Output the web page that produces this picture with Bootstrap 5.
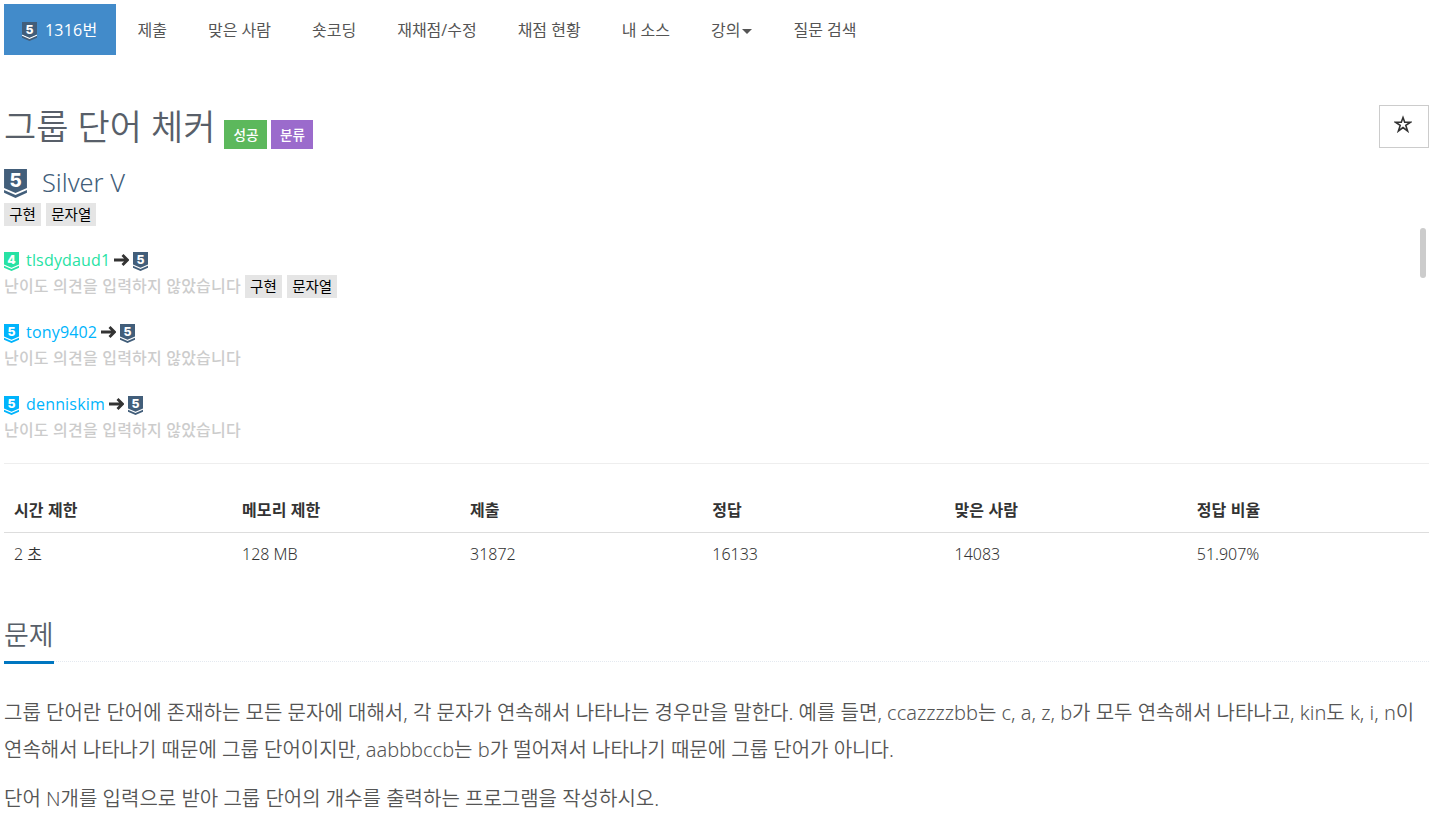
<!DOCTYPE html>
<html lang="ko">

<head>
    <meta charset="UTF-8">
    <meta name="viewport" content="width=device-width, initial-scale=1.0">
    <title>1316번: 그룹 단어 체커</title>
    <link href="https://cdn.jsdelivr.net/npm/bootstrap@5.3.0/dist/css/bootstrap.min.css" rel="stylesheet">
    <style>
        body {
            font-family: "Open Sans", "Noto Sans CJK KR", sans-serif;
            font-size: 16px;
            color: #333;
            padding: 4px 5px 0 4px;
            height: 813px;
            overflow: hidden;
        }

        .problem-menu {
            gap: 2px;
            height: 51px;
        }

        .problem-menu .nav-link {
            color: #555;
            padding: 14px 19.5px 0;
            height: 51px;
            line-height: 24px;
            border-radius: 0;
            white-space: nowrap;
        }

        .problem-menu .nav-link.active {
            background-color: #428bca;
            color: #fff;
            padding: 14px 18px 0;
            width: 112px;
            letter-spacing: 0.2px;
        }

        .problem-menu .dropdown-toggle::after {
            margin-left: 2px;
            vertical-align: 2px;
            border-top-width: 5px;
            border-left-width: 5px;
            border-right-width: 5px;
        }

        .tier-icon {
            width: 15px;
            height: 19px;
            flex: none;
        }

        .tier-icon.large {
            width: 23px;
            height: 29px;
        }

        .tier-icon text {
            font-family: Inter, sans-serif;
            font-weight: 800;
            font-size: 98px;
            fill: #fff;
            text-anchor: middle;
        }

        .problem-head {
            margin-top: 50px;
            height: 50px;
        }

        .problem-title {
            font-size: 35px;
            font-weight: 350;
            color: #585f69;
            line-height: 44px;
            margin: 0 9px 0 0;
        }

        .problem-label {
            color: #fff;
            font-size: 13.6px;
            font-weight: 500;
            line-height: 29px;
            height: 29px;
            width: 43px;
            text-align: center;
            margin: 15px 4px 0 0;
        }

        .label-ac {
            background-color: #5cb85c;
        }

        .label-tag {
            background-color: #9b6bcc;
            width: 42px;
        }

        .btn-star {
            width: 50px;
            height: 43px;
            border: 1px solid #ccc;
            border-radius: 0;
            padding: 0 2px 9px 0;
        }

        .tier-name {
            color: #425e7a;
            font-family: "Noto Sans", sans-serif;
            font-size: 25.4px;
            font-weight: 350;
            line-height: 34px;
            margin: 12px 0 0;
            gap: 15px;
        }

        .tier-name span {
            margin-top: -2px;
        }

        .algo-tag {
            background-color: #e5e5e5;
            color: #000;
            font-size: 14.5px;
            line-height: 23px;
            height: 23px;
            padding: 0 5.2px;
            margin-right: 5px;
        }

        .opinion-box {
            margin-top: 2px;
            height: 235px;
            padding-right: 3px;
        }

        .opinion-list {
            padding-top: 19px;
        }

        .opinion {
            height: 72px;
        }

        .opinion > div {
            height: 26px;
            line-height: 26px;
        }

        .opinion .tier-icon {
            margin-top: 2px;
        }

        .opinion .user-name {
            margin: 0 4px 0 7px;
            text-decoration: none;
            letter-spacing: 0.18px;
        }

        .opinion .arrow {
            margin-right: 4px;
        }

        .no-opinion {
            color: #ccc;
            font-weight: 500;
            letter-spacing: 0.2px;
            margin-right: 4px;
        }

        .user-name.platinum {
            color: #27e2a4;
        }

        .user-name.diamond {
            color: #00b4fc;
        }

        .scroll-thumb {
            width: 6px;
            height: 50px;
            border-radius: 3px;
            background-color: #ccc;
        }

        #problem-info {
            margin: 23px 0 0;
            table-layout: fixed;
            --bs-table-color: #333;
            border-color: #ddd;
        }

        #problem-info th {
            padding: 11px 10px 10px;
            line-height: 24px;
            border-bottom: 1px solid #ddd;
            letter-spacing: 0.1px;
        }

        #problem-info td {
            padding: 9px 10px;
            line-height: 24px;
            border: 0;
            font-family: "Noto Sans", "Noto Sans CJK KR", sans-serif;
            font-weight: 350;
        }

        .headline {
            border-bottom: 1px dotted #e4e9f0;
            margin-top: 43px;
            height: 44px;
            display: flex;
        }

        .headline h2 {
            font-size: 27px;
            font-weight: 350;
            color: #585f69;
            line-height: 34px;
            height: 46px;
            margin: 0;
            border-bottom: 3px solid #0076c0;
        }

        .problem-text {
            margin-top: 32px;
            font-family: "Noto Sans", "Noto Sans CJK KR", sans-serif;
            font-size: 20px;
            font-weight: 350;
            line-height: 37px;
            color: #555;
        }

        .problem-text p {
            margin-bottom: 12px;
        }
    </style>
</head>

<body>
    <!-- tier badge: shield with a chevron below -->
    <svg width="0" height="0" class="position-absolute">
        <symbol id="shield" viewBox="0 0 120 152">
            <path d="M0 0H120V100L60 126L0 100Z" fill="currentColor" />
            <path d="M0 110L60 136L120 110V125L60 152L0 125Z" fill="currentColor" />
        </symbol>
        <symbol id="arrow" viewBox="0 0 15 12">
            <path d="M0 6H13M8.5 1L13.5 6L8.5 11" fill="none" stroke="#333" stroke-width="2.8" />
        </symbol>
    </svg>

    <ul class="nav nav-pills problem-menu flex-nowrap">
        <li class="nav-item">
            <a class="nav-link active d-flex" href="#">
                <svg class="tier-icon" viewBox="0 0 120 152" style="color:#425e7a;margin:4px 8px 0 0"><path d="M0 98L60 124L120 98V118L60 144L0 118Z" fill="#fff" /><use href="#shield" /><text x="60" y="96">5</text></svg>1316번</a>
        </li>
        <li class="nav-item"><a class="nav-link" href="#">제출</a></li>
        <li class="nav-item"><a class="nav-link" href="#">맞은 사람</a></li>
        <li class="nav-item"><a class="nav-link" href="#">숏코딩</a></li>
        <li class="nav-item"><a class="nav-link" href="#">재채점/수정</a></li>
        <li class="nav-item"><a class="nav-link" href="#">채점 현황</a></li>
        <li class="nav-item"><a class="nav-link" href="#">내 소스</a></li>
        <li class="nav-item dropdown"><a class="nav-link dropdown-toggle" href="#" data-bs-toggle="dropdown">강의</a></li>
        <li class="nav-item"><a class="nav-link" href="#">질문 검색</a></li>
    </ul>

    <div class="problem-head d-flex align-items-start">
        <h1 class="problem-title">그룹 단어 체커</h1>
        <span class="problem-label label-ac">성공</span>
        <span class="problem-label label-tag">분류</span>
        <button type="button" class="btn btn-star ms-auto">
            <svg width="18" height="18" viewBox="0 0 18 18"><path d="M9 2.5L10.7 7.2H16.5L11.8 10.4L13.6 16L9 12.5L4.4 16L6.2 10.4L1.5 7.2H7.3Z" fill="none" stroke="#333" stroke-width="1.6" /></svg>
        </button>
    </div>

    <div class="tier-name d-flex align-items-center">
        <svg class="tier-icon large" viewBox="0 0 120 152" style="color:#425e7a"><use href="#shield" /><text x="60" y="95">5</text></svg>
        <span>Silver V</span>
    </div>
    <div class="d-flex mt-1">
        <span class="algo-tag">구현</span>
        <span class="algo-tag">문자열</span>
    </div>

    <div class="opinion-box d-flex">
        <div class="opinion-list flex-grow-1">
            <div class="opinion">
                <div class="d-flex align-items-center">
                    <svg class="tier-icon" viewBox="0 0 120 152" style="color:#27e2a4"><use href="#shield" /><text x="60" y="96">4</text></svg>
                    <a class="user-name platinum" href="#">tlsdydaud1</a>
                    <svg class="arrow" width="15" height="12"><use href="#arrow" /></svg>
                    <svg class="tier-icon" viewBox="0 0 120 152" style="color:#425e7a"><use href="#shield" /><text x="60" y="96">5</text></svg>
                </div>
                <div class="d-flex align-items-center">
                    <span class="no-opinion">난이도 의견을 입력하지 않았습니다</span>
                    <span class="algo-tag">구현</span>
                    <span class="algo-tag">문자열</span>
                </div>
            </div>
            <div class="opinion">
                <div class="d-flex align-items-center">
                    <svg class="tier-icon" viewBox="0 0 120 152" style="color:#00b4fc"><use href="#shield" /><text x="60" y="96">5</text></svg>
                    <a class="user-name diamond" href="#">tony9402</a>
                    <svg class="arrow" width="15" height="12"><use href="#arrow" /></svg>
                    <svg class="tier-icon" viewBox="0 0 120 152" style="color:#425e7a"><use href="#shield" /><text x="60" y="96">5</text></svg>
                </div>
                <div><span class="no-opinion">난이도 의견을 입력하지 않았습니다</span></div>
            </div>
            <div class="opinion">
                <div class="d-flex align-items-center">
                    <svg class="tier-icon" viewBox="0 0 120 152" style="color:#00b4fc"><use href="#shield" /><text x="60" y="96">5</text></svg>
                    <a class="user-name diamond" href="#">denniskim</a>
                    <svg class="arrow" width="15" height="12"><use href="#arrow" /></svg>
                    <svg class="tier-icon" viewBox="0 0 120 152" style="color:#425e7a"><use href="#shield" /><text x="60" y="96">5</text></svg>
                </div>
                <div><span class="no-opinion">난이도 의견을 입력하지 않았습니다</span></div>
            </div>
        </div>
        <div class="scroll-thumb"></div>
    </div>
    <div class="border-top" style="--bs-border-color:#eee"></div>

    <table class="table" id="problem-info">
        <thead>
            <tr>
                <th style="width:16%">시간 제한</th>
                <th style="width:16%">메모리 제한</th>
                <th style="width:17%">제출</th>
                <th style="width:17%">정답</th>
                <th style="width:17%">맞은 사람</th>
                <th style="width:17%">정답 비율</th>
            </tr>
        </thead>
        <tbody>
            <tr>
                <td>2 초</td>
                <td>128 MB</td>
                <td>31872</td>
                <td>16133</td>
                <td>14083</td>
                <td>51.907%</td>
            </tr>
        </tbody>
    </table>

    <div class="headline">
        <h2>문제</h2>
    </div>
    <div class="problem-text">
        <p>그룹 단어란 단어에 존재하는 모든 문자에 대해서, 각 문자가 연속해서 나타나는 경우만을 말한다. 예를 들면, ccazzzzbb는 c, a, z, b가 모두 연속해서 나타나고, kin도 k, i, n이 연속해서 나타나기 때문에 그룹 단어이지만, aabbbccb는 b가 떨어져서 나타나기 때문에 그룹 단어가 아니다.</p>
        <p>단어 N개를 입력으로 받아 그룹 단어의 개수를 출력하는 프로그램을 작성하시오.</p>
    </div>

    <script src="https://cdn.jsdelivr.net/npm/bootstrap@5.3.0/dist/js/bootstrap.bundle.min.js"></script>
</body>

</html>
